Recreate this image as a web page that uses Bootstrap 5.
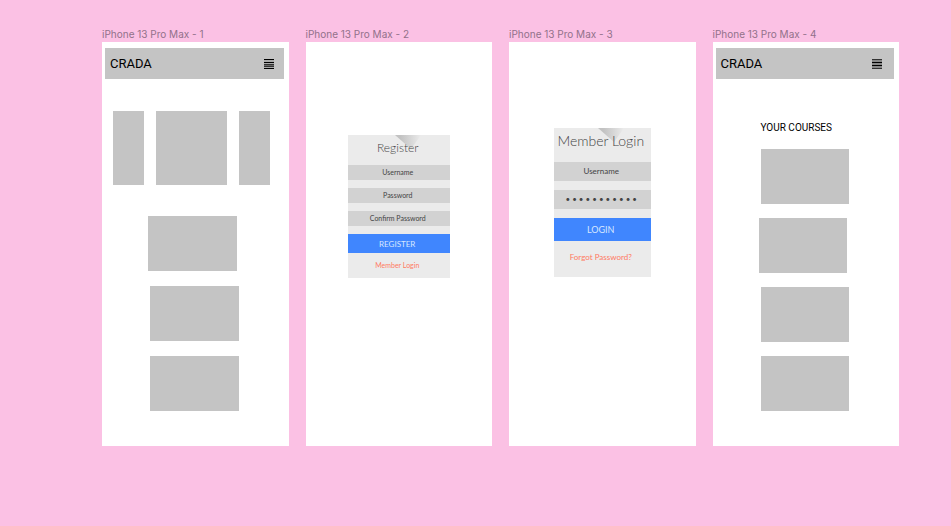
<!DOCTYPE html>
<html lang="en">
<head>
<meta charset="utf-8">
<meta name="viewport" content="width=device-width, initial-scale=1">
<title>CRADA wireframes</title>
<link href="https://cdn.jsdelivr.net/npm/bootstrap@5.3.0/dist/css/bootstrap.min.css" rel="stylesheet">
<style>
  body { background: #fbc1e4; font-family: Roboto, "Liberation Sans", sans-serif; color: #000; }
  .boards { display: grid; grid-template-columns: repeat(4, 1fr); gap: 17px; padding: 28px 52px 80px 102px; }
  .board-name { font: 400 10px/12px Inter, sans-serif; color: #92718a; white-space: nowrap; margin: 0; padding-bottom: 2px; }
  .screen { background: #fff; }
  .topbar { background: #c4c4c4; margin: 6px 5px 0 3px; padding: 0 12px 0 5px; height: 31px; }
  .topbar-inset { padding-right: 10px; }
  .brand { font-size: 13px; line-height: 20px; color: #000; text-decoration: none; }
  .menu-btn { line-height: 0; }
  .tile { background: #c4c4c4; height: 55px; }
  .stack { display: grid; gap: 15px; padding: 0 50px 35px 48px; }
  .stack-tight { gap: 14px; }
  .tile-near { margin: 0 2px 0 -2px; }
  .carousel-strip { display: grid; grid-template-columns: 31fr 72fr 31fr; gap: 12px; padding: 32px 19px 31px 11px; }
  .carousel-strip .tile { height: 74px; }
  .courses-title { font-size: 10px; line-height: 16px; font-weight: 400; margin: 41px 0 13px 48px; white-space: nowrap; }
  .form-card { position: relative; background: #ebebeb; font-family: Lato, sans-serif; text-align: center; }
  .fold { position: absolute; top: 0; left: 46%; width: 26px; height: 16px; }
  .form-title { position: relative; font-weight: 300; color: #444; margin: 0; white-space: nowrap; }
  .field { display: block; width: 100%; border: 0; border-radius: 0; background: #d2d2d2; padding: 0 2px 1px 0; text-align: center; color: #444; }
  .field::placeholder { color: #444; opacity: 1; }
  .submit { display: block; width: 100%; border: 0; border-radius: 0; padding: 0 3px 0 0; background: #4086fe; color: #d7e6ff; }
  .submit:hover { background: #3478ee; color: #fff; }
  .alt-link { display: block; padding-right: 3px; color: #ff7a62; text-decoration: none; }
  .register { margin: 93px 42px 0; padding-bottom: 6px; font-size: 7px; }
  .register .form-title { font-size: 12px; line-height: 26px; padding: 0 2px 4px 0; }
  .register .field { height: 15px; margin-bottom: 8px; font-size: 7px; }
  .register .submit { height: 19px; font-size: 8px; line-height: 18px; }
  .register .alt-link { line-height: 14px; padding-top: 5px; }
  .login { margin: 86px 45px 0; padding-bottom: 12px; font-size: 8px; }
  .login .form-title { font-size: 14px; line-height: 26px; padding: 0 3px 8px 0; }
  .login .field { height: 19px; margin-bottom: 9px; font-size: 8px; }
  .login .submit { height: 23px; font-size: 9px; line-height: 23px; }
  .login .alt-link { line-height: 16px; padding-top: 8px; }
</style>
<script src="https://cdn.jsdelivr.net/npm/bootstrap@5.3.0/dist/js/bootstrap.bundle.min.js"></script>
</head>
<body>
<main class="boards">
  <section class="d-flex flex-column">
    <h2 class="board-name">iPhone 13 Pro Max - 1</h2>
    <div class="screen flex-grow-1">
      <nav class="topbar topbar-inset d-flex align-items-center justify-content-between">
        <a class="brand" href="#">CRADA</a>
        <button class="menu-btn btn p-0 border-0 rounded-0" type="button" aria-label="Menu">
          <svg width="10" height="10" viewBox="0 0 10 10" shape-rendering="crispEdges"><path fill="#aaa" d="M0 0h10v10H0z"/><path fill="#000" d="M0 0h10v1H0zM0 3h10v1H0zM0 9h10v1H0z"/><path fill="#333" d="M0 5h10v1H0zM0 7h10v1H0z"/><path fill="#666" d="M0 6h10v1H0z"/></svg>
        </button>
      </nav>
      <div class="carousel-strip">
        <div class="tile"></div><div class="tile"></div><div class="tile"></div>
      </div>
      <div class="stack">
        <div class="tile tile-near"></div><div class="tile"></div><div class="tile"></div>
      </div>
    </div>
  </section>

  <section class="d-flex flex-column">
    <h2 class="board-name">iPhone 13 Pro Max - 2</h2>
    <div class="screen flex-grow-1 overflow-hidden">
      <form class="form-card register">
        <svg class="fold" viewBox="0 0 26 16" aria-hidden="true"><defs><linearGradient id="foldA" x1="0" y1="0" x2="1" y2="0"><stop offset=".2" stop-color="#c2c2c2"/><stop offset="1" stop-color="#ebebeb"/></linearGradient></defs><path fill="url(#foldA)" d="M0 0h26L16 14z"/></svg>
        <h3 class="form-title">Register</h3>
        <input class="field" type="text" placeholder="Username" aria-label="Username">
        <input class="field" type="password" placeholder="Password" aria-label="Password">
        <input class="field" type="password" placeholder="Confirm Password" aria-label="Confirm Password">
        <button class="submit" type="button">REGISTER</button>
        <a class="alt-link" href="#">Member Login</a>
      </form>
    </div>
  </section>

  <section class="d-flex flex-column">
    <h2 class="board-name">iPhone 13 Pro Max - 3</h2>
    <div class="screen flex-grow-1 overflow-hidden">
      <form class="form-card login">
        <svg class="fold" viewBox="0 0 26 16" aria-hidden="true"><defs><linearGradient id="foldB" x1="0" y1="0" x2="1" y2="0"><stop offset=".2" stop-color="#c2c2c2"/><stop offset="1" stop-color="#ebebeb"/></linearGradient></defs><path fill="url(#foldB)" d="M0 0h26L16 14z"/></svg>
        <h3 class="form-title">Member Login</h3>
        <input class="field" type="text" placeholder="Username" aria-label="Username">
        <input class="field" type="password" placeholder="• • • • • • • • • • •" aria-label="Password">
        <button class="submit" type="button">LOGIN</button>
        <a class="alt-link" href="#">Forgot Password?</a>
      </form>
    </div>
  </section>

  <section class="d-flex flex-column">
    <h2 class="board-name">iPhone 13 Pro Max - 4</h2>
    <div class="screen flex-grow-1">
      <nav class="topbar d-flex align-items-center justify-content-between">
        <a class="brand" href="#">CRADA</a>
        <button class="menu-btn btn p-0 border-0 rounded-0" type="button" aria-label="Menu">
          <svg width="10" height="10" viewBox="0 0 10 10" shape-rendering="crispEdges"><path fill="#888" d="M0 0h10v10H0z"/><path fill="#000" d="M0 3h10v1H0zM0 6h10v1H0z"/><path fill="#333" d="M0 0h10v1H0zM0 9h10v1H0z"/></svg>
        </button>
      </nav>
      <h3 class="courses-title">YOUR COURSES</h3>
      <div class="stack stack-tight">
        <div class="tile"></div><div class="tile tile-near"></div><div class="tile"></div><div class="tile"></div>
      </div>
    </div>
  </section>
</main>
</body>
</html>
